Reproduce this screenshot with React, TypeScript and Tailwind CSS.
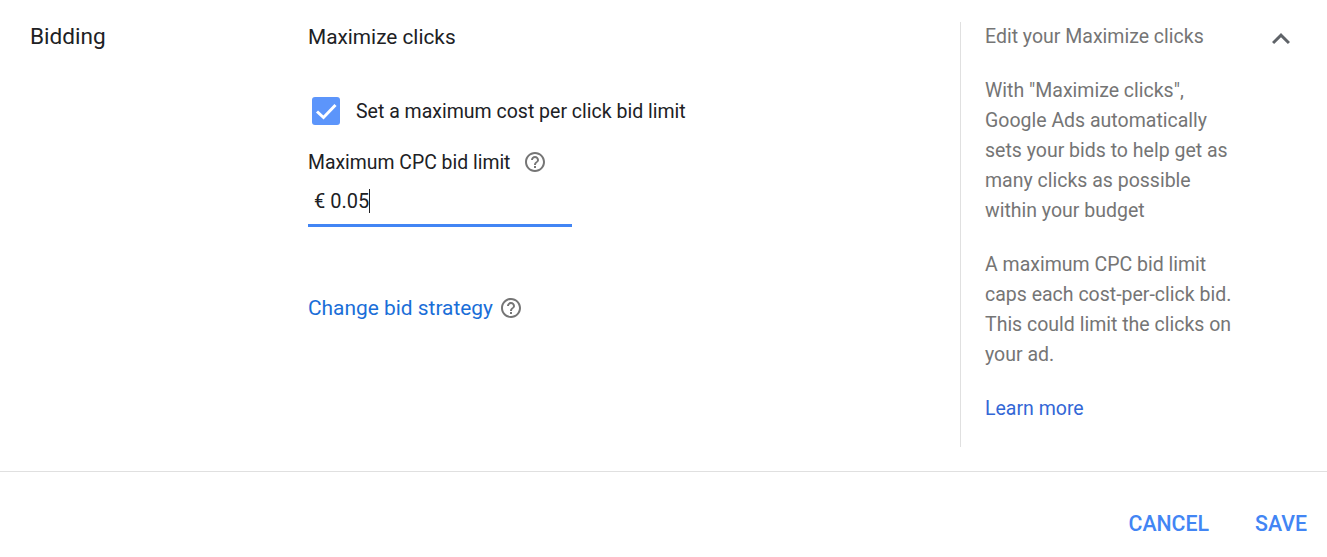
const HelpIcon = () => (
  <svg width="24" height="24" viewBox="0 0 24 24" fill="#757575">
    <path d="M11 18h2v-2h-2v2zm1-16C6.48 2 2 6.48 2 12s4.48 10 10 10 10-4.48 10-10S17.52 2 12 2zm0 18c-4.41 0-8-3.59-8-8s3.59-8 8-8 8 3.59 8 8-3.59 8-8 8zm0-14c-2.21 0-4 1.79-4 4h2c0-1.1.9-2 2-2s2 .9 2 2c0 2-3 1.75-3 5h2c0-2.25 3-2.5 3-5 0-2.21-1.79-4-4-4z" />
  </svg>
);

const App = () => {
  return (
    <div className="w-[1327px] h-[557px] bg-white overflow-hidden font-['Roboto',sans-serif] flex flex-col">
      <div className="h-[472px] flex border-b border-[#e0e0e0] shrink-0">
        <div className="w-[308px] pl-[30px] pt-[23px] text-[22.6px] leading-[28px] text-[#202124] shrink-0">
          Bidding
        </div>

        <div className="w-[652px] shrink-0 pt-[23px] text-[#202124]">
          <div className="text-[20.8px] leading-[28px]">Maximize clicks</div>

          <div className="flex items-center h-[28px] mt-[46px] ml-[4px] gap-[16px]">
            <div className="w-[28px] h-[28px] rounded-[3px] bg-[#5c95fb] flex items-center justify-center">
              <svg width="24" height="24" viewBox="0 0 24 24" fill="none" stroke="white" strokeWidth="3">
                <path d="M3 12.5l6.5 6L21.5 6" />
              </svg>
            </div>
            <span className="text-[19.5px] leading-[28px] pt-[1px]">Set a maximum cost per click bid limit</span>
          </div>

          <div className="flex items-center h-[28px] mt-[23px] gap-[13px] text-[19.4px] leading-[28px]">
            <span className="pt-[2px]">Maximum CPC bid limit</span>
            <HelpIcon />
          </div>

          <div className="w-[264px] h-[41px] mt-[10px] border-b-[3px] border-[#4285f4] pl-[6px] flex items-start pt-[1px] text-[20px] leading-[28px]">
            <span>€ 0.05</span>
            <span className="w-px h-[24px] mt-[2px] bg-[#202124]"></span>
          </div>

          <div className="flex items-center mt-[67px] gap-[6px] text-[20.9px] leading-[28px] text-[#1a6ed8]">
            <span>Change bid strategy</span>
            <HelpIcon />
          </div>
        </div>

        <div className="w-[367px] shrink-0 pt-[22px]">
          <div className="h-[425px] border-l border-[#e0e0e0] pl-[24px] pr-[20px] text-[19.5px] leading-[30px] text-[#757575]">
            <div className="flex justify-between items-start h-[29px]">
              <span className="leading-[28px] pt-[1px]">Edit your Maximize clicks</span>
              <svg className="-mt-[1px] mr-[8px]" width="36" height="36" viewBox="0 0 24 24" fill="#5f6368">
                <path d="M7.41 15.41 12 10.83l4.59 4.58L18 14l-6-6-6 6z" />
              </svg>
            </div>
            <div className="w-[250px] mt-[25px]">
              With "Maximize clicks", Google Ads automatically sets your bids to help get as many clicks as possible within your budget
            </div>
            <div className="w-[250px] mt-[24px]">
              A maximum CPC bid limit caps each cost-per-click bid. This could limit the clicks on your ad.
            </div>
            <div className="mt-[24px] text-[#3367d6]">Learn more</div>
          </div>
        </div>
      </div>

      <div className="flex justify-end gap-[46px] pt-[38px] pr-[20px] text-[21.3px] leading-[28px] font-medium text-[#4285f4]">
        <span>CANCEL</span>
        <span>SAVE</span>
      </div>
    </div>
  );
};

export default App;
